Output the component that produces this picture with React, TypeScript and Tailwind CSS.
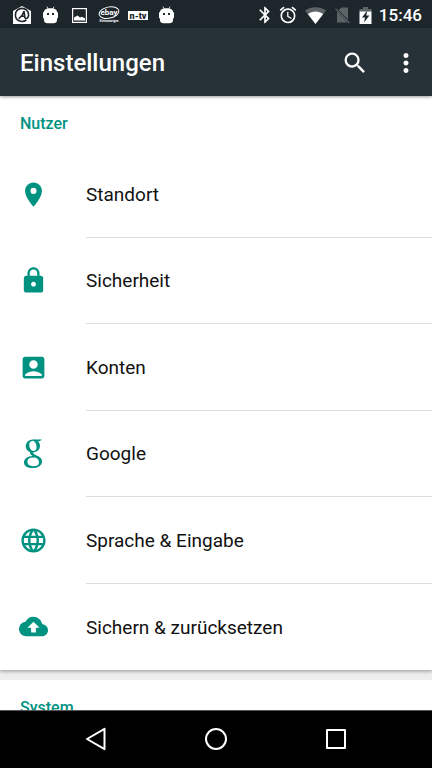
import React from 'react';
import { MdAccountBox, MdAlarm, MdBackup, MdBluetooth, MdLanguage, MdLock, MdMoreVert, MdPlace, MdSearch } from 'react-icons/md';

const GoogleIcon = ({ className }: { className?: string }) => (
  <svg className={className} viewBox="0 0 29 29" fill="currentColor" fillRule="evenodd">
    <path d="M14 0.4C18.2 0.4 21 3.2 21 6.8C21 10.6 18 13.4 13.8 13.4C9.6 13.4 6.8 10.6 6.8 7.2C6.8 3.4 9.8 0.4 14 0.4ZM13.2 1.9C11 2.2 9.9 4 10.3 6.8C10.8 10 12.4 12.1 14.6 11.9C16.9 11.6 17.9 9.8 17.5 7C17 3.8 15.4 1.6 13.2 1.9Z" />
    <path d="M14 0.4H23L20.6 2.2H16.6Z" />
    <path d="M14.8 12.4C13.8 13.4 13.8 14 14.6 14.8L17.4 16.6C21 17.8 23 19.4 23 22.4C23 26.4 19 29 13.8 29C8.4 29 5 27 5 23.4C5 19.6 9 17.2 13.6 17L11.6 15.4C10.6 14.2 10.8 13.2 12 12ZM14.4 18.5C10.4 18.5 8.4 19.8 8.4 22.6C8.4 25.6 10.6 27.2 14.6 27.2C18.2 27.2 20 25.8 20 23.4C20 20.6 18 18.5 14.4 18.5Z" />
  </svg>
);

const HomeAlertIcon = () => (
  <svg className="w-[18px] h-[18px]" viewBox="0 0 18 18" fill="none">
    <path d="M9 0L18 5V18H0V5Z" fill="white" />
    <path d="M13.4 14C8.6 17.4 2.4 14.4 2.4 9C2.4 5 5.4 2.4 9 2.4S15.6 5 15.6 9C15.6 11.6 13.8 13 12.2 12.2" stroke="#1c262b" strokeWidth="1.6" />
    <path d="M5.6 12.4C8 11.4 10 8 11 5.2L12 12.4M7.6 10.2H11.8" stroke="#1c262b" strokeWidth="1.6" />
  </svg>
);

const DroidIcon = () => (
  <svg className="w-[15px] h-[18px]" viewBox="0 0 15 18" fill="white">
    <path d="M4 0.6L5.2 3M11 0.6L9.8 3" stroke="white" strokeWidth="0.8" />
    <path d="M1 6C1 3.4 3.6 2.2 7.5 2.2S14 3.4 14 6V14C14 16.2 12.6 17.2 10.4 17.2H4.6C2.4 17.2 1 16.2 1 14Z" />
    <rect x="0" y="6" width="15" height="6.5" rx="1" />
    <rect x="4" y="7" width="2" height="2" fill="#1c262b" />
    <rect x="9" y="7" width="2" height="2" fill="#1c262b" />
  </svg>
);

const PictureIcon = () => (
  <svg className="w-[15px] h-[15px]" viewBox="0 0 15 15" fill="none">
    <rect x="0.6" y="0.6" width="13.8" height="13.8" stroke="white" strokeWidth="1.2" />
    <path d="M2 12.5V9.5L5.5 7.5L8 9.5L10 8.8L13 10.5V12.5Z" fill="white" />
  </svg>
);

const EbayIcon = () => (
  <svg className="w-[22px] h-[18px]" viewBox="0 0 22 18" fill="none">
    <ellipse cx="11" cy="6.6" rx="10" ry="5.6" stroke="white" strokeWidth="1" transform="rotate(-12 11 6.6)" />
    <text x="11" y="9" fontSize="8" fontWeight="700" fill="white" textAnchor="middle" fontFamily="Roboto, sans-serif">ebay</text>
    <text x="11" y="16" fontSize="3" fontWeight="700" fill="white" textAnchor="middle" fontFamily="Roboto, sans-serif">Kleinanzeigen</text>
  </svg>
);

const NtvIcon = () => (
  <svg className="w-[20px] h-[11px]" viewBox="0 0 20 11" fill="none">
    <rect x="0" y="1" width="20" height="9" fill="white" />
    <text x="10" y="9" fontSize="9" fontWeight="900" fill="#1c262b" textAnchor="middle" fontFamily="Roboto, sans-serif">n-tv</text>
  </svg>
);

const WifiIcon = () => (
  <svg className="w-[21px] h-[17px]" viewBox="0 0 21 17">
    <path d="M10.5 17L0 3.5C6 -1 15 -1 21 3.5Z" fill="#5d6468" />
    <path d="M10.5 17L2.8 7C7.5 3.6 13.5 3.6 18.2 7Z" fill="white" />
  </svg>
);

const NoSimIcon = () => (
  <svg className="w-[15px] h-[17px]" viewBox="0 0 15 17">
    <path d="M3.5 3L6.5 0.5H13V12.6Z" fill="#5d6468" />
    <path d="M2 4.5V15.5H12.6Z" fill="#5d6468" />
    <path d="M0.6 1.6L14.4 16" stroke="#5d6468" strokeWidth="1.3" />
  </svg>
);

const BatteryIcon = () => (
  <svg className="w-[13px] h-[17px]" viewBox="0 0 13 17">
    <path d="M4 0H9V2H12.5V5H0.5V2H4Z" fill="#5d6468" />
    <path d="M0.5 4.5H12.5V17H0.5Z" fill="white" />
    <path d="M8.2 3.5L3 10.5H6L5 15.5L10.4 8.5H7.3Z" fill="#1c262b" />
  </svg>
);

const notifications = [HomeAlertIcon, DroidIcon, PictureIcon, EbayIcon, NtvIcon, DroidIcon];

const items = [
  { label: 'Standort', icon: MdPlace },
  { label: 'Sicherheit', icon: MdLock },
  { label: 'Konten', icon: MdAccountBox },
  { label: 'Google', icon: GoogleIcon },
  { label: 'Sprache & Eingabe', icon: MdLanguage },
  { label: 'Sichern & zurücksetzen', icon: MdBackup },
];

const StatusBar = () => (
  <div className="h-7 shrink-0 flex items-center justify-between bg-[#1c262b] pt-0.5 pl-[7px] pr-[10px] text-white">
    <div className="flex items-center">
      {notifications.map((Icon, index) => (
        <span key={index} className="w-[29px] flex justify-center">
          <Icon />
        </span>
      ))}
    </div>
    <div className="flex items-center gap-[7px]">
      <div className="flex items-center gap-[9px]">
        <MdBluetooth className="w-5 h-5 -mx-1" />
        <MdAlarm className="w-5 h-5 -mx-0.5" />
        <WifiIcon />
        <NoSimIcon />
        <BatteryIcon />
      </div>
      <span className="text-[17px] leading-5 font-medium">15:46</span>
    </div>
  </div>
);

const SectionTitle = ({ children }: { children: React.ReactNode }) => (
  <h2 className="h-[55px] flex items-center px-5 text-base font-medium text-[#009281]">{children}</h2>
);

const App = () => {
  return (
    <div className="h-screen flex flex-col overflow-hidden bg-[#eeeeee] font-['Roboto',sans-serif]">
      <StatusBar />

      <header className="relative z-10 h-[68px] shrink-0 flex items-center justify-between bg-[#263238] pt-0.5 pl-5 pr-[11px] text-white shadow-[0_1px_3px_rgba(0,0,0,0.4)]">
        <h1 className="text-2xl font-medium">Einstellungen</h1>
        <div className="flex items-center gap-[22px]">
          <button type="button" aria-label="Suchen">
            <MdSearch className="w-7 h-7" />
          </button>
          <button type="button" aria-label="Weitere Optionen">
            <MdMoreVert className="w-[30px] h-[30px]" />
          </button>
        </div>
      </header>

      <main className="flex-1 min-h-0 overflow-hidden">
        <section className="bg-white shadow-[0_1px_4px_rgba(0,0,0,0.4)]">
          <SectionTitle>Nutzer</SectionTitle>
          <ul className="grid auto-rows-fr min-h-[519px]">
            {items.map(({ label, icon: Icon }, index) => (
              <li key={label} className="flex">
                <a href="#" className="flex-1 flex items-stretch pl-[19px]">
                  <span className="w-[67px] flex items-center">
                    <Icon className="w-[29px] h-[29px] text-[#009281]" />
                  </span>
                  <span
                    className={`flex-1 flex items-center pt-0.5 text-[19px] text-[#111111] ${
                      index < items.length - 1 ? 'border-b border-[#dedede]' : ''
                    }`}
                  >
                    {label}
                  </span>
                </a>
              </li>
            ))}
          </ul>
        </section>

        <section className="mt-[10px] bg-white">
          <SectionTitle>System</SectionTitle>
        </section>
      </main>

      <nav className="h-[58px] shrink-0 flex justify-center items-center bg-black border-t border-[#555555] pb-0.5 text-white">
        <button type="button" aria-label="Zurück" className="w-[120px] flex justify-center">
          <svg className="w-6 h-6" viewBox="0 0 24 24" fill="none" stroke="currentColor" strokeWidth="2" strokeLinejoin="round">
            <path d="M20.5 1.8V22.2L3 12Z" />
          </svg>
        </button>
        <button type="button" aria-label="Startseite" className="w-[120px] flex justify-center">
          <svg className="w-6 h-6" viewBox="0 0 24 24" fill="none" stroke="currentColor" strokeWidth="2">
            <circle cx="12" cy="12" r="10" />
          </svg>
        </button>
        <button type="button" aria-label="Letzte Apps" className="w-[120px] flex justify-center">
          <svg className="w-6 h-6" viewBox="0 0 24 24" fill="none" stroke="currentColor" strokeWidth="2" strokeLinejoin="round">
            <rect x="3" y="3" width="18" height="18" />
          </svg>
        </button>
      </nav>
    </div>
  );
};

export default App;
